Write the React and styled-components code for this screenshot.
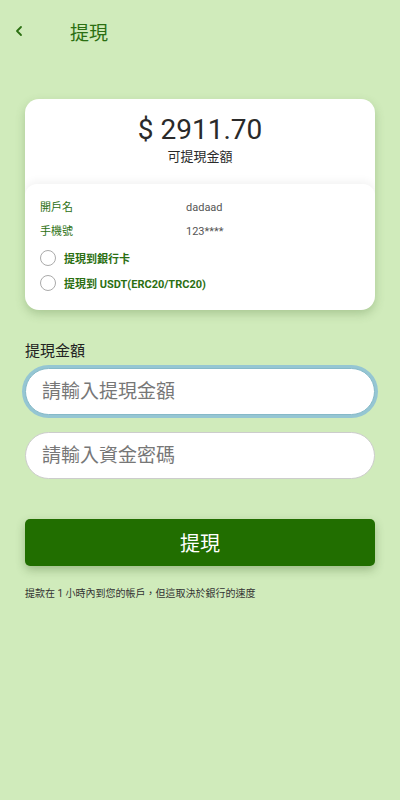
import { createGlobalStyle, styled } from "styled-components"

const Global = createGlobalStyle`
  html, body { margin: 0; padding: 0; background: #d0ebbb; }
  body { font-family: Roboto, "Noto Sans CJK TC", sans-serif; }
  * { box-sizing: border-box; }
`

const Page = styled.div`
  min-height: 800px;
  background: #d0ebbb;
`

const Header = styled.div`
  height: 62px;
  display: flex;
  align-items: center;
  padding: 0 0 0 13px;
`

const Back = styled.button`
  border: none;
  background: none;
  padding: 0;
  width: 14px;
  display: flex;
  align-items: center;
  cursor: pointer;
  color: #2b6f12;
`

const HeaderTitle = styled.h1`
  margin: 0 0 0 43px;
  font-size: 19px;
  font-weight: 400;
  color: #2b6f12;
`

const Wrapper = styled.div`
  padding: 37px 25px 0;
`

const Card = styled.div`
  background: #fff;
  border-radius: 14px;
  box-shadow: 0 4px 10px rgba(80, 120, 60, 0.3);
  overflow: hidden;
`

const Balance = styled.div`
  text-align: center;
  padding: 14px 0 18px;
  color: #2a2a2a;
`

const Amount = styled.div`
  font-size: 28px;
  line-height: 34px;
`

const AmountLabel = styled.div`
  font-size: 13px;
  line-height: 18px;
  margin-top: 1px;
`

const Details = styled.div`
  border-radius: 12px;
  box-shadow: 0 -3px 8px rgba(0, 0, 0, 0.05);
  padding: 17px 15px 19px;
`

const Row = styled.div`
  display: grid;
  grid-template-columns: 146px 1fr;
  font-size: 11px;
  line-height: 14px;
  margin-bottom: 10px;
`

const Key = styled.span`
  color: #2b6f12;
`

const Value = styled.span`
  color: #555;
`

const Option = styled.label`
  display: flex;
  align-items: center;
  gap: 8px;
  font-size: 11px;
  font-weight: 700;
  color: #2b6f12;
  height: 17px;
  margin-top: ${(p) => p.$top}px;
`

const Radio = styled.span`
  width: 16px;
  height: 16px;
  border-radius: 50%;
  border: 1px solid #aaa;
  background: #fff;
`

const FieldLabel = styled.div`
  margin-top: 31px;
  font-size: 15px;
  line-height: 20px;
  color: #222;
`

const Input = styled.input`
  display: block;
  width: 100%;
  height: 47px;
  border-radius: 24px;
  border: 1px solid #ccc;
  background: #fff;
  padding: 0 16px;
  font-size: 19px;
  font-family: Roboto, "Noto Sans CJK TC", sans-serif;
  margin-top: ${(p) => p.$top}px;
  outline: none;
  box-shadow: ${(p) => (p.$focus ? "0 0 0 3px #95c6d3" : "none")};
  border-color: ${(p) => (p.$focus ? "#86b9c8" : "#ccc")};
  &::placeholder { color: #777; }
`

const Submit = styled.button`
  display: block;
  width: 100%;
  height: 47px;
  margin-top: 40px;
  border: none;
  border-radius: 5px;
  background: #216e00;
  color: #fff;
  font-size: 20px;
  font-family: Roboto, "Noto Sans CJK TC", sans-serif;
  box-shadow: 0 4px 10px rgba(40, 80, 20, 0.3);
  cursor: pointer;
`

const Note = styled.p`
  margin: 19px 0 0;
  font-size: 10px;
  color: #333;
`

const App = () => {
  return (
    <Page>
      <Global />
      <Header>
        <Back>
          <svg width="12" height="14" viewBox="0 0 12 14" fill="none">
            <path d="M8 3L4 7l4 4" stroke="currentColor" strokeWidth="1.8" strokeLinecap="round" strokeLinejoin="round" />
          </svg>
        </Back>
        <HeaderTitle>提現</HeaderTitle>
      </Header>
      <Wrapper>
        <Card>
          <Balance>
            <Amount>$ 2911.70</Amount>
            <AmountLabel>可提現金額</AmountLabel>
          </Balance>
          <Details>
            <Row>
              <Key>開戶名</Key>
              <Value>dadaad</Value>
            </Row>
            <Row>
              <Key>手機號</Key>
              <Value>123****</Value>
            </Row>
            <Option $top={4}>
              <Radio />
              提現到銀行卡
            </Option>
            <Option $top={8}>
              <Radio />
              提現到 USDT(ERC20/TRC20)
            </Option>
          </Details>
        </Card>
        <FieldLabel>提現金額</FieldLabel>
        <Input $top={7} $focus placeholder="請輸入提現金額" autoFocus />
        <Input $top={17} placeholder="請輸入資金密碼" type="password" />
        <Submit>提現</Submit>
        <Note>提款在 1 小時內到您的帳戶，但這取決於銀行的速度</Note>
      </Wrapper>
    </Page>
  )
}

export default App
